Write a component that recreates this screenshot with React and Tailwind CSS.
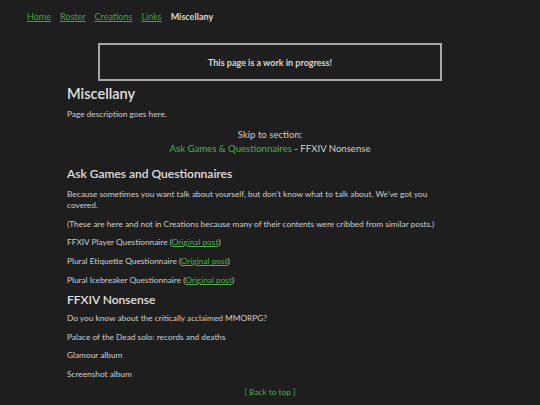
export default function App() {
  return (
    <div className="min-h-[405px] bg-[#1e1e1e] text-[#cfcfcf] font-['Lato',_'Noto_Sans',_sans-serif] text-[8.3px] leading-[11px]">
      <nav className="flex gap-[9px] pl-[27px] pt-[11px] text-[9px] leading-[12px]">
        <a className="text-[#42a342] underline">Home</a>
        <a className="text-[#42a342] underline">Roster</a>
        <a className="text-[#42a342] underline">Creations</a>
        <a className="text-[#42a342] underline">Links</a>
        <span className="font-bold text-[#d8d8d8]">Miscellany</span>
      </nav>
      <div className="mx-auto mt-[20px] flex h-[38px] w-[344px] items-center justify-center border-2 border-[#a8a8a8] text-[9px] font-bold text-[#d8d8d8]">
        This page is a work in progress!
      </div>
      <main className="px-[67px]">
        <h1 className="mt-[3px] text-[14.6px] leading-[20px] font-semibold text-[#e0e0e0]">Miscellany</h1>
        <p className="mt-[5px]">Page description goes here.</p>
        <div className="mt-[8px] text-center text-[9.6px] leading-[14px]">
          <div>Skip to section:</div>
          <div>
            <a className="text-[#4caf4c]">Ask Games &amp; Questionnaires</a> - FFXIV Nonsense
          </div>
        </div>
        <h2 className="mt-[10px] text-[12px] leading-[16px] font-semibold text-[#e0e0e0]">Ask Games and Questionnaires</h2>
        <p className="mt-[7px] pr-[20px]">Because sometimes you want talk about yourself, but don't know what to talk about. We've got you covered.</p>
        <p className="mt-[8px]">(These are here and not in Creations because many of their contents were cribbed from similar posts.)</p>
        <p className="mt-[7px]">FFXIV Player Questionnaire (<a className="text-[#4caf4c] underline">Original post</a>)</p>
        <p className="mt-[8px]">Plural Etiquette Questionnaire (<a className="text-[#4caf4c] underline">Original post</a>)</p>
        <p className="mt-[8px]">Plural Icebreaker Questionnaire (<a className="text-[#4caf4c] underline">Original post</a>)</p>
        <h2 className="mt-[6px] text-[12px] leading-[16px] font-semibold text-[#e0e0e0]">FFXIV Nonsense</h2>
        <p className="mt-[5px]">Do you know about the critically acclaimed MMORPG?</p>
        <p className="mt-[8px]">Palace of the Dead solo: records and deaths</p>
        <p className="mt-[7px]">Glamour album</p>
        <p className="mt-[8px]">Screenshot album</p>
        <p className="mt-[7px] text-center text-[#4caf4c]">[ Back to top ]</p>
      </main>
    </div>
  );
}
